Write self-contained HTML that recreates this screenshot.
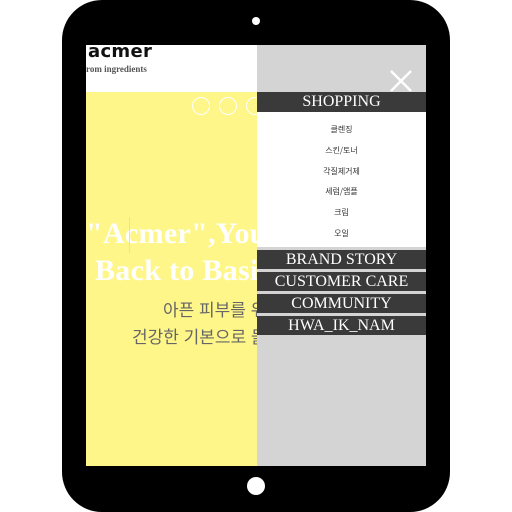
<!DOCTYPE html>
<html><head><meta charset="utf-8"><style>
*{margin:0;padding:0;box-sizing:border-box}
body{width:512px;height:512px;background:#fff;position:relative;overflow:hidden;font-family:"Liberation Serif",serif}
.tab{position:absolute;left:62px;top:0;width:388px;height:512px;background:#000;border-radius:40px}
.scr{position:absolute;left:86px;top:45px;width:340px;height:421px;background:#fff;overflow:hidden}
.yel{position:absolute;left:0;top:47px;width:171px;height:374px;background:#fef689;overflow:hidden}
.logo{position:absolute;left:2px;top:-4px;font:bold 18px "DejaVu Sans",sans-serif;color:#111;letter-spacing:0.3px}
.sub{position:absolute;left:0;top:19px;font:bold 9px "Liberation Serif",serif;color:#555}
.circ{position:absolute;top:5px;width:18px;height:18px;border:1.5px solid #fff;border-radius:50%}
.h{position:absolute;color:#fff;font-size:30px;white-space:nowrap;font-weight:bold;letter-spacing:0.3px}
.k{position:absolute;color:#666;font:17px "Liberation Sans","Noto Sans CJK KR",sans-serif;white-space:nowrap}
.menu{position:absolute;left:171px;top:0;width:169px;height:421px;background:#d5d4d5}
.bar{position:absolute;left:0;width:169px;height:19px;background:#3a3a3a;color:#fff;text-align:center;font-size:16px;line-height:19px}
.list{position:absolute;left:0;top:67px;width:169px;height:135px;background:#fff}
.li{position:absolute;width:100%;text-align:center;font:8px "Noto Sans CJK KR",sans-serif;color:#333}
</style></head><body>
<div class="tab"></div>
<div style="position:absolute;left:252px;top:17px;width:8px;height:8px;border-radius:50%;background:#fff"></div>
<div style="position:absolute;left:247px;top:477px;width:18px;height:18px;border-radius:50%;background:#fff"></div>
<div class="scr">
<div class="logo">acmer</div>
<div class="sub">rom ingredients</div>
<div class="yel">
<div class="circ" style="left:106px"></div>
<div class="circ" style="left:133px"></div>
<div class="circ" style="left:160px"></div>
<div class="h" style="left:0;top:125px">"Acmer",Your</div>
<div class="h" style="left:9px;top:162px">Back to Basics</div>
<div style="position:absolute;left:43px;top:125px;width:1px;height:36px;background:#ddd"></div>
<div class="k" style="left:77px;top:204px">아픈 피부를 위한</div>
<div class="k" style="left:46px;top:231px">건강한 기본으로 돌아가</div>
</div>
<div class="menu">
<svg style="position:absolute;left:133px;top:25px" width="22" height="22"><path d="M1 1L21 21M21 1L1 21" stroke="#fff" stroke-width="2.5"/></svg>
<div class="bar" style="top:47px;height:20px">SHOPPING</div>
<div class="list">
<div class="li" style="top:12px">클렌징</div>
<div class="li" style="top:33px">스킨/토너</div>
<div class="li" style="top:54px">각질제거제</div>
<div class="li" style="top:74px">세럼/앰플</div>
<div class="li" style="top:95px">크림</div>
<div class="li" style="top:116px">오일</div>
</div>
<div class="bar" style="top:205px">BRAND STORY</div>
<div class="bar" style="top:227px">CUSTOMER CARE</div>
<div class="bar" style="top:249px">COMMUNITY</div>
<div class="bar" style="top:271px">HWA_IK_NAM</div>
</div>
</div>
</body></html>
